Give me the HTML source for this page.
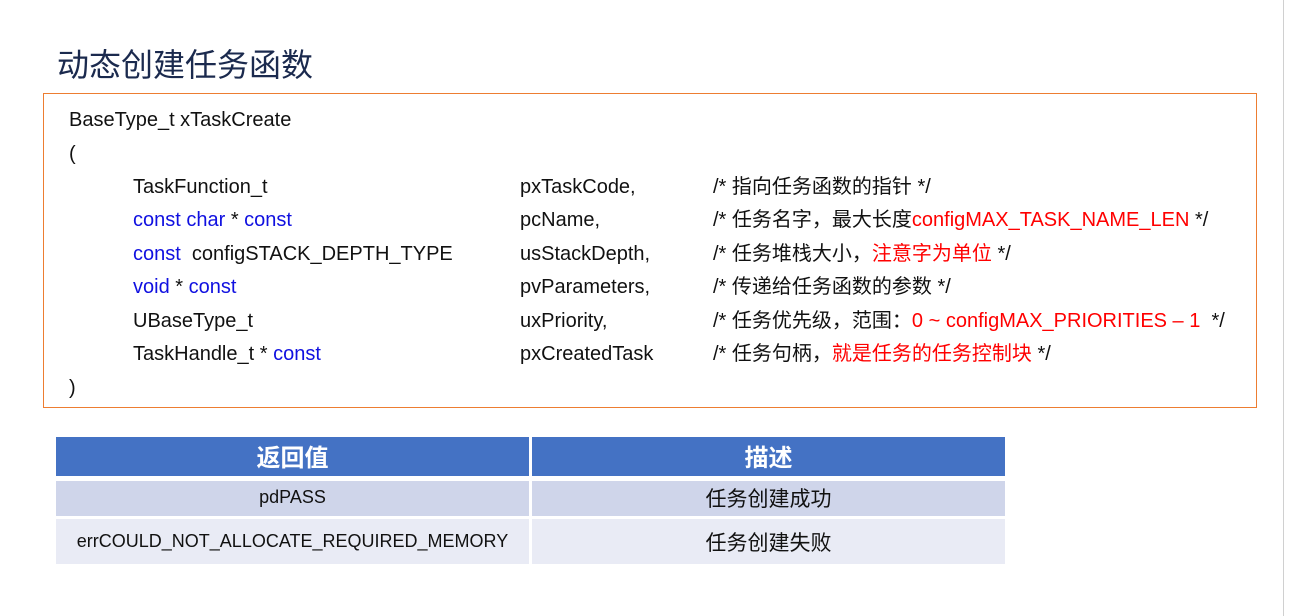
<!DOCTYPE html>
<html><head><meta charset="utf-8"><style>
body{margin:0;width:1291px;height:616px;background:#fff;position:relative;overflow:hidden;font-family:"Liberation Sans","Noto Sans CJK SC",sans-serif;color:#111;}
.a{position:absolute;white-space:nowrap;}
h1{position:absolute;left:57px;top:43px;margin:0;font-size:32px;font-weight:normal;color:#1b2a4e;font-family:"Noto Sans CJK SC","Liberation Sans",sans-serif;line-height:40px;}
.box{position:absolute;left:43px;top:93px;width:1212px;height:313px;border:1px solid #ed7d31;}
.r{position:absolute;font-size:20px;line-height:24px;white-space:nowrap;}
.b{color:#1010e0}.red{color:#f00}
.vl{position:absolute;left:1283px;top:0;width:1px;height:616px;background:#d0d0d0;}
.c{position:absolute;text-align:center;font-size:18px;}
</style></head><body>
<div class="vl"></div>
<h1>动态创建任务函数</h1>
<div class="box"></div>
<div class="r" style="left:69px;top:108px">BaseType_t xTaskCreate</div>
<div class="r" style="left:69px;top:142px">(</div>
<div class="r" style="left:133px;top:175px">TaskFunction_t</div>
<div class="r" style="left:133px;top:208px"><span class="b">const char</span> * <span class="b">const</span></div>
<div class="r" style="left:133px;top:242px"><span class="b">const</span>&nbsp; configSTACK_DEPTH_TYPE</div>
<div class="r" style="left:133px;top:275px"><span class="b">void</span> * <span class="b">const</span></div>
<div class="r" style="left:133px;top:309px">UBaseType_t</div>
<div class="r" style="left:133px;top:342px">TaskHandle_t * <span class="b">const</span></div>
<div class="r" style="left:69px;top:376px">)</div>
<div class="r" style="left:520px;top:175px">pxTaskCode,</div>
<div class="r" style="left:520px;top:208px">pcName,</div>
<div class="r" style="left:520px;top:242px">usStackDepth,</div>
<div class="r" style="left:520px;top:275px">pvParameters,</div>
<div class="r" style="left:520px;top:309px">uxPriority,</div>
<div class="r" style="left:520px;top:342px">pxCreatedTask</div>
<div class="r" style="left:713px;top:175px">/* 指向任务函数的指针 */</div>
<div class="r" style="left:713px;top:208px">/* 任务名字，最大长度<span class="red">configMAX_TASK_NAME_LEN</span> */</div>
<div class="r" style="left:713px;top:242px">/* 任务堆栈大小，<span class="red">注意字为单位</span> */</div>
<div class="r" style="left:713px;top:275px">/* 传递给任务函数的参数 */</div>
<div class="r" style="left:713px;top:309px">/* 任务优先级，范围：<span class="red">0 ~ configMAX_PRIORITIES – 1</span>&nbsp; */</div>
<div class="r" style="left:713px;top:342px">/* 任务句柄，<span class="red">就是任务的任务控制块</span> */</div>

<div class="a" style="left:56px;top:437px;width:473px;height:39px;background:#4472c4"></div>
<div class="a" style="left:532px;top:437px;width:473px;height:39px;background:#4472c4"></div>
<div class="a" style="left:56px;top:481px;width:473px;height:35px;background:#cfd5ea"></div>
<div class="a" style="left:532px;top:481px;width:473px;height:35px;background:#cfd5ea"></div>
<div class="a" style="left:56px;top:519px;width:473px;height:45px;background:#e9ebf5"></div>
<div class="a" style="left:532px;top:519px;width:473px;height:45px;background:#e9ebf5"></div>
<div class="c" style="left:56px;width:473px;top:438px;font-size:24px;font-weight:bold;color:#fff">返回值</div>
<div class="c" style="left:532px;width:473px;top:438px;font-size:24px;font-weight:bold;color:#fff">描述</div>
<div class="c" style="left:56px;width:473px;top:487px">pdPASS</div>
<div class="c" style="left:532px;width:473px;top:483px;font-size:21px">任务创建成功</div>
<div class="c" style="left:56px;width:473px;top:531px">errCOULD_NOT_ALLOCATE_REQUIRED_MEMORY</div>
<div class="c" style="left:532px;width:473px;top:527px;font-size:21px">任务创建失败</div>
</body></html>
